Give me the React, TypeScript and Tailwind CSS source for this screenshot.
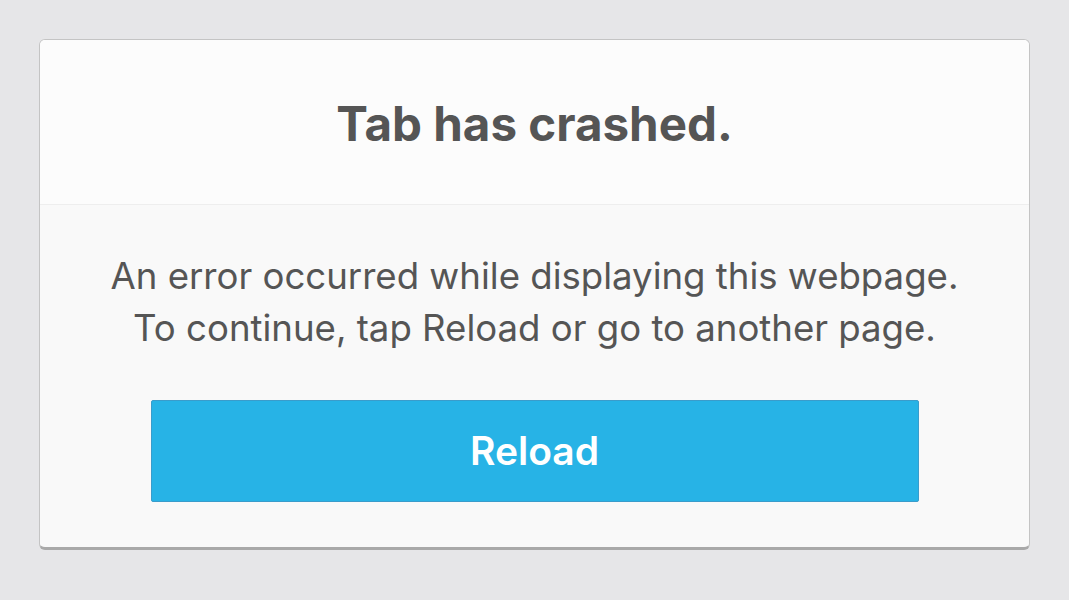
import React from "react";

export default function App() {
  return (
    <div
      className="w-[1069px] h-[600px] bg-[#e6e6e8] pt-[39px] pl-[39px]"
      style={{ fontFamily: "Inter, 'Noto Sans', sans-serif" }}
    >
      <div className="w-[991px] h-[511px] rounded-[6px] border border-[#c4c4c4] border-b-[3px] border-b-[#a9a9a9] bg-[#f9f9f9] overflow-hidden flex flex-col">
        <div className="h-[165px] bg-[#fcfcfc] border-b border-[#eeeeee] flex items-center justify-center pt-[4px]">
          <h1 className="text-[47.5px] font-bold text-[#555555]">Tab has crashed.</h1>
        </div>
        <div className="flex flex-col items-center pt-[45px]">
          <p className="text-[36.6px] leading-[52px] text-[#555555] text-center">
            An error occurred while displaying this webpage.
            <br />
            To continue, tap Reload or go to another page.
          </p>
          <button className="mt-[46px] w-[768px] h-[102px] bg-[#27b3e6] border border-[#3a9ccb] rounded-[2px] text-white text-[39px] font-semibold">
            Reload
          </button>
        </div>
      </div>
    </div>
  );
}
